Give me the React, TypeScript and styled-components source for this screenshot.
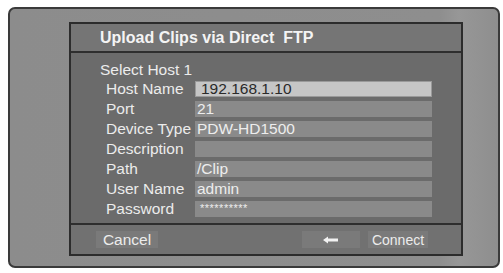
import styled, { createGlobalStyle } from "styled-components";

const GlobalStyle = createGlobalStyle`
  html, body {
    margin: 0;
    padding: 0;
    background: #ffffff;
  }
  body {
    font-family: "Liberation Sans", Arial, sans-serif;
  }
`;

const Page = styled.div`
  width: 503px;
  height: 273px;
  padding: 7px 3px 5px 8px;
  box-sizing: border-box;
`;

const Frame = styled.div`
  width: 492px;
  height: 261px;
  box-sizing: border-box;
  border: 2px solid #3a3a3a;
  border-radius: 7px;
  background: linear-gradient(90deg, #8c8c8c 0%, #8e8e8e 88%, #979797 92%, #8e8e8e 100%);
  padding: 13px 0 0 59px;
`;

const Panel = styled.div`
  width: 394px;
  height: 234px;
  box-sizing: border-box;
  border: 2px solid #2c2c2c;
  background: #6d6d6d;
  display: flex;
  flex-direction: column;
`;

const TitleBar = styled.div`
  height: 27px;
  flex-shrink: 0;
  display: flex;
  align-items: center;
  padding-left: 29px;
  background: #757575;
  border-bottom: 2px solid #2e2e2e;
  color: #f4f4f4;
  font-weight: bold;
  font-size: 16px;
  white-space: pre;
`;

const Body = styled.div`
  flex: 1;
  padding: 8px 0 4px 29px;
  display: flex;
  flex-direction: column;
  background: #6b6b6b;
`;

const HostLabel = styled.div`
  height: 18px;
  line-height: 18px;
  font-size: 15.5px;
  color: #ececec;
`;

const Row = styled.div`
  height: 20px;
  display: flex;
  align-items: center;
  padding-left: 6px;
`;

const Label = styled.div`
  width: 89px;
  flex-shrink: 0;
  font-size: 15.5px;
  color: #ececec;
  white-space: nowrap;
`;

const Field = styled.div<{ $active?: boolean }>`
  width: 237px;
  height: 16px;
  box-sizing: border-box;
  padding-left: ${({ $active }) => ($active ? "6px" : "2px")};
  display: flex;
  align-items: center;
  font-size: 15.5px;
  background: ${({ $active }) => ($active ? "#c6c6c6" : "#8a8a8a")};
  color: ${({ $active }) => ($active ? "#2a2a2a" : "#ededed")};
  box-shadow: ${({ $active }) => ($active ? "inset 0 0 0 1px #9a9a9a" : "none")};
`;

const Stars = styled.span`
  font-size: 11px;
  letter-spacing: 0.5px;
  padding-left: 3px;
  position: relative;
  top: -1px;
`;

const BottomBar = styled.div`
  height: 29px;
  flex-shrink: 0;
  border-top: 2px solid #2e2e2e;
  background: #717171;
  display: flex;
  align-items: center;
  padding: 0 33px 0 25px;
`;

const Button = styled.div<{ $w: number; $size?: number }>`
  width: ${({ $w }) => $w}px;
  height: 17px;
  display: flex;
  align-items: center;
  justify-content: center;
  background: #7a7a7a;
  color: #ececec;
  font-size: ${({ $size }) => $size ?? 15.5}px;
`;

const Spacer = styled.div`
  flex: 1;
`;

const Gap = styled.div`
  width: 8px;
`;

const fields: { label: string; value: string; active?: boolean }[] = [
  { label: "Host Name", value: "192.168.1.10", active: true },
  { label: "Port", value: "21" },
  { label: "Device Type", value: "PDW-HD1500" },
  { label: "Description", value: "" },
  { label: "Path", value: "/Clip" },
  { label: "User Name", value: "admin" },
];

export default function App() {
  return (
    <>
      <GlobalStyle />
      <Page>
        <Frame>
          <Panel>
            <TitleBar>{"Upload Clips via Direct  FTP"}</TitleBar>
            <Body>
              <HostLabel>Select Host 1</HostLabel>
              {fields.map((f) => (
                <Row key={f.label}>
                  <Label>{f.label}</Label>
                  <Field $active={f.active}>{f.value}</Field>
                </Row>
              ))}
              <Row>
                <Label>Password</Label>
                <Field>
                  <Stars>**********</Stars>
                </Field>
              </Row>
            </Body>
            <BottomBar>
              <Button $w={62}>Cancel</Button>
              <Spacer />
              <Button $w={58}>
                <svg width="16" height="8" viewBox="0 0 16 8">
                  <path d="M0 4 L5 0.5 L5 2.6 L15 2.6 L15 5.4 L5 5.4 L5 7.5 Z" fill="#f2f2f2" />
                </svg>
              </Button>
              <Gap />
              <Button $w={60} $size={14}>
                Connect
              </Button>
            </BottomBar>
          </Panel>
        </Frame>
      </Page>
    </>
  );
}
